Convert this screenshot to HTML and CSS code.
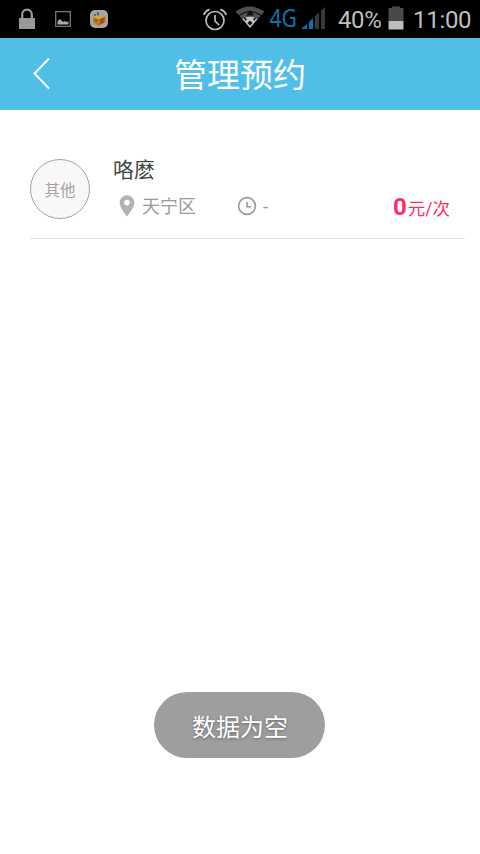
FILE: index.html
```html
<!DOCTYPE html>
<html lang="zh-CN">
<head>
<meta charset="utf-8">
<title>管理预约</title>
<link rel="stylesheet" href="styles.css">
</head>
<body>
<div class="status">
  <svg class="lock" width="18" height="22" viewBox="0 0 18 22"><path d="M4.2 11V6.500a4.8 4.8 0 0 1 9.6 0V11" fill="none" stroke="#999" stroke-width="2.2"/><path d="M1 10h16v11H1z" fill="#999"/></svg>
  <svg class="picture" width="16" height="16" viewBox="0 0 16 16"><path d="M.7.7h14.6v14.6H.7z" fill="none" stroke="#777" stroke-width="1.3"/><path d="M2.500 13.500v-3l2-2.500 2 1.500 1.500 1.500 2-1 1.500 1 2-.5v3z" fill="#aaa"/></svg>
  <svg class="app" width="18" height="18" viewBox="0 0 18 18"><rect width="18" height="18" rx="5" fill="#a5a5a5"/><path d="M3 7l6 2 6-3 .5 6L9 16l-5.500-3z" fill="#b47a20"/><path d="M2.500 6.500l5.500 2.500 7-3-4-1.500z" fill="#d8a43d"/><path d="M4 5.500l2-1M7 2.500l2 1M8 5.500v-3" stroke="#1674a4" stroke-width="1.700"/><path d="M11 9v5m3.500-6-3 3 2.500 1.500M5 10l2 1" fill="none" stroke="#a53c16" stroke-width="1.400"/></svg>
  <svg class="alarm" width="24" height="25" viewBox="0 0 24 25" fill="none" stroke="#bdbdbd"><circle cx="12" cy="14.500" r="9" stroke-width="1.700"/><path d="M12 9v6l4 4" stroke-width="1.700"/><path d="M.8 9Q2 5 6.500 3.300M23.200 9Q22 5 17.500 3.300" stroke-width="1.800"/></svg>
  <svg class="wifi" width="30" height="24" viewBox="0 0 30 24"><path d="M.5 5.500Q15-4.500 29.500 5.500L15 22z" fill="#505050"/><path d="M4 9.500Q15 1.500 26 9.500" fill="none" stroke="#000" stroke-width="1"/><path d="M7.500 13Q15 8.500 22.500 13L15 22z" fill="#c4c4c4"/><path d="M15 4l4 5.500h-8zM15 14.500l2.500 2.500-2.500 2.500-2.500-2.500zM8.500 11l3.500 2-1.500 2zM21.500 11L18 13l1.500 2z" fill="#111"/></svg>
  <svg class="network" width="28" height="32" viewBox="0 0 28 32"><text x="0.500" y="25" textLength="27.500" lengthAdjust="spacingAndGlyphs">4G</text></svg>
  <svg class="signal" width="25" height="23" viewBox="0 0 25 23"><path d="M0 23l6-5v5zM8 16l4-4v11H8z" fill="#0675aa"/><path d="M14 10l4-3.500V23h-4zM20 4.500L24 1v22h-4z" fill="#383838"/></svg>
  <span class="percent">40%</span>
  <svg class="battery" width="16" height="24" viewBox="0 0 16 24"><path d="M.5 2H4V.5h8V2h3.500v13H.5z" fill="#484848"/><path d="M.5 15h15v8.500H.5z" fill="#bebebe"/></svg>
  <span class="time">11:00</span>
</div>
<header class="header">
  <svg class="back" width="18" height="34" viewBox="0 0 18 34"><path d="M16 1.500L1.500 16.500l14.500 15" fill="none" stroke="#fff" stroke-width="2"/></svg>
  <h1>管理预约</h1>
</header>
<main class="list">
  <article class="item">
    <div class="avatar">其他</div>
    <div class="body">
      <h2>咯麽</h2>
      <div class="meta">
        <span class="place"><svg width="16" height="22" viewBox="0 0 16 22"><path fill-rule="evenodd" d="M8 .3A7.400 7.400 0 0 0 .6 7.700C.6 12.500 8 21.500 8 21.500s7.400-9 7.400-13.800A7.400 7.400 0 0 0 8 .3zm0 4.500a2.800 2.800 0 1 1 0 5.600 2.800 2.800 0 0 1 0-5.600z" fill="#b2b2b7"/></svg><span class="label">天宁区</span></span>
        <span class="when"><svg width="20" height="20" viewBox="0 0 20 20" fill="none" stroke="#999"><circle cx="10" cy="10" r="8.400" stroke-width="1.600"/><path d="M10 6v4.700h4" stroke-width="1.600"/></svg>-</span>
        <span class="price"><b>0</b>元/次</span>
      </div>
    </div>
  </article>
</main>
<div class="toast">数据为空</div>
</body>
</html>
```

FILE: styles.css
```css
* { box-sizing: border-box; }
body {
  margin: 0;
  height: 854px;
  background: #fff;
  font-family: Roboto, "Noto Sans CJK SC", sans-serif;
  overflow: hidden;
}
svg { display: block; flex: none; }
.status {
  display: flex;
  align-items: flex-start;
  height: 38px;
  background: #000;
  color: #bebebe;
  font-size: 24px;
  line-height: 28px;
  white-space: nowrap;
}
.lock { margin: 8px 0 0 18px; }
.picture { margin: 11px 0 0 19px; }
.app { margin: 10px 0 0 19px; }
.alarm { margin: 6px 0 0 95px; }
.wifi { margin: 6px 0 0 8px; }
.network {
  margin: 2px 0 0 4px;
  overflow: visible;
  fill: #0675aa;
  font-family: "Noto Sans", sans-serif;
  font-size: 25px;
}
.signal { margin: 6px 0 0 4px; }
.percent { width: 44px; margin: 6px 0 0 12px; letter-spacing: -.4px; }
.battery { margin: 6px 0 0 6px; }
.time { margin: 6px 0 0 9px; letter-spacing: -.3px; }
.header {
  display: flex;
  align-items: center;
  height: 72px;
  padding: 0 33px;
  background: #50bfe8;
  color: #fff;
}
.header h1 {
  flex: 1;
  margin: 0 18px 0 0;
  padding-top: 4px;
  font-size: 33px;
  font-weight: 400;
  line-height: 68px;
  text-align: center;
}
.list { padding: 49px 15px 0 30px; }
.item {
  display: flex;
  height: 80px;
  border-bottom: 1px solid #e1e1e1;
}
.avatar {
  flex: none;
  width: 60px;
  height: 60px;
  border: 1px solid #a99da0;
  border-radius: 50%;
  background: #f8f8f8;
  color: #aaa0a2;
  font-size: 15.500px;
  line-height: 62px;
  text-align: center;
}
.body { flex: 1; margin-left: 23px; }
.body h2 {
  margin: -4px 0 0;
  color: #444;
  font-size: 21px;
  font-weight: 400;
  line-height: 30px;
}
.meta {
  display: flex;
  align-items: center;
  height: 30px;
  margin-top: 6px;
  color: #999;
  font-size: 18px;
}
.place, .when { display: flex; align-items: center; }
.place { width: 118px; padding-left: 6px; gap: 7px; }
.label { margin-top: -2px; }
.when { margin-left: 6px; gap: 6px; }
.price {
  display: flex;
  align-items: baseline;
  margin: 1px 15px 0 auto;
  color: #fc2c68;
  font-size: 17.500px;
}
.price b { margin-right: 1px; font-size: 24px; }
.toast {
  position: absolute;
  left: 154px;
  top: 692px;
  width: 171px;
  height: 66px;
  padding-left: 1px;
  border-radius: 33px;
  background: #9e9e9e;
  color: #fff;
  font-size: 24px;
  line-height: 72px;
  text-align: center;
  text-shadow: 0 1px 3px rgba(0, 0, 0, .35);
}
```
